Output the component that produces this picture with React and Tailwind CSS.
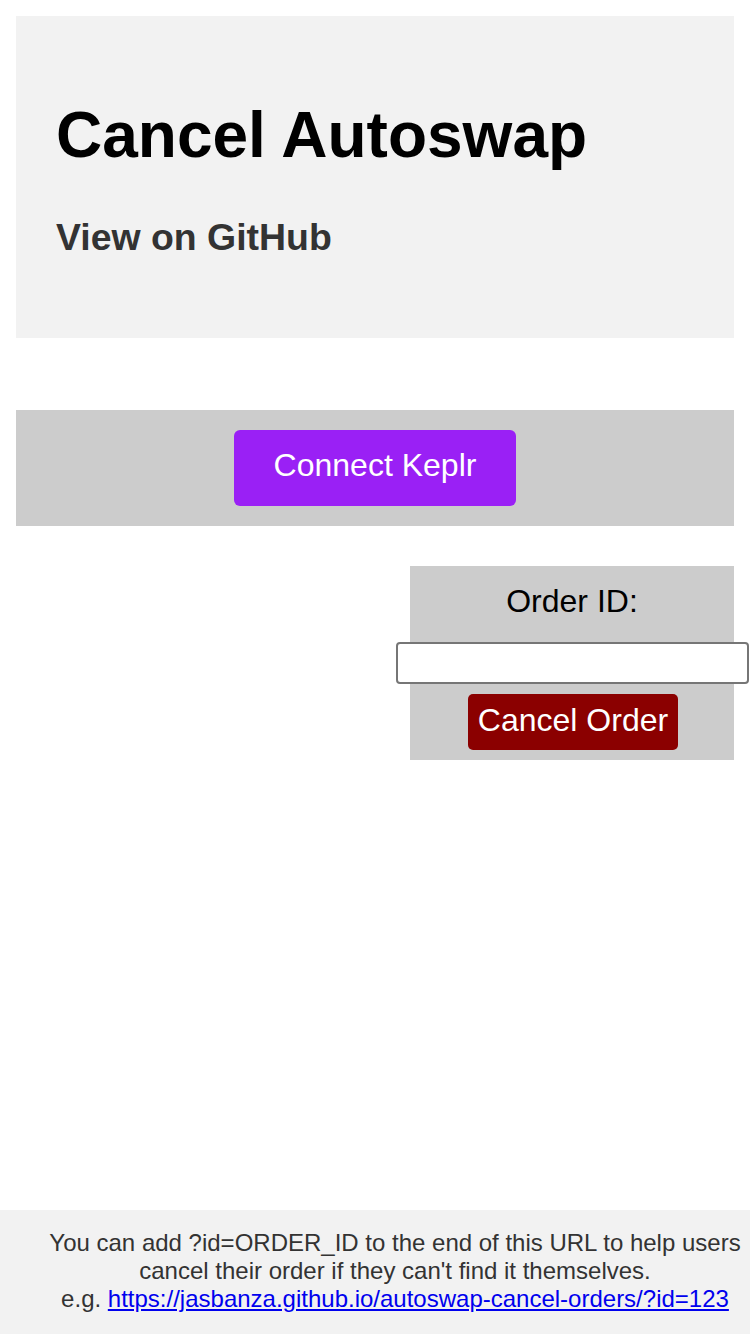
import React, { useState } from 'react'

const App = () => {
    const [orderId, setOrderId] = useState('')

    return (
        <div className="min-h-screen flex flex-col bg-white font-['Liberation_Sans',Arial,sans-serif] text-black">
            {/* Header */}
            <div className="mx-4 mt-4 bg-[#f2f2f2] px-10 pt-10 pb-[43px]">
                <h1 className="mt-[42px] text-[64px] leading-[74px] font-bold">Cancel Autoswap</h1>
                <h3 className="mt-[44px] mb-[36px] text-[37.44px] leading-[43px] font-bold text-[#333]">
                    <a href="#">View on GitHub</a>
                </h3>
            </div>

            {/* Keplr */}
            <div className="mx-4 mt-[72px] bg-[#cccccc] py-5 flex justify-center">
                <button className="bg-[#9a20f5] text-white text-[32px] leading-[36px] px-10 pt-[17px] pb-[23px] rounded-[6px]">
                    Connect Keplr
                </button>
            </div>

            {/* Order form */}
            <div className="ml-auto mr-4 mt-10 w-[324px] bg-[#cccccc] pt-[17px] pb-[10px] flex flex-col items-center">
                <label className="text-[32px] leading-[37px]">Order ID:</label>
                <input
                    type="text"
                    value={orderId}
                    onChange={(e) => setOrderId(e.target.value)}
                    className="mt-[22px] w-[353px] h-[42px] shrink-0 bg-white border-2 border-[#767676] rounded-[4px] px-2 text-[20px] outline-none"
                />
                <button className="mt-[10px] ml-[2px] bg-[#8b0000] text-white text-[32px] leading-[38px] px-[10px] pt-[7px] pb-[11px] rounded-[5px]">
                    Cancel Order
                </button>
            </div>

            {/* Footer */}
            <div className="mt-auto bg-[#f2f2f2] pl-10 pt-[19px] pb-[21px] text-center text-[24px] leading-[28px] text-[#333]">
                You can add ?id=ORDER_ID to the end of this URL to help users cancel their order if they can't find it themselves.
                <br />
                e.g. <a href="#" className="text-[#0000ee] underline">https://jasbanza.github.io/autoswap-cancel-orders/?id=123</a>
            </div>
        </div>
    )
}

export default App
